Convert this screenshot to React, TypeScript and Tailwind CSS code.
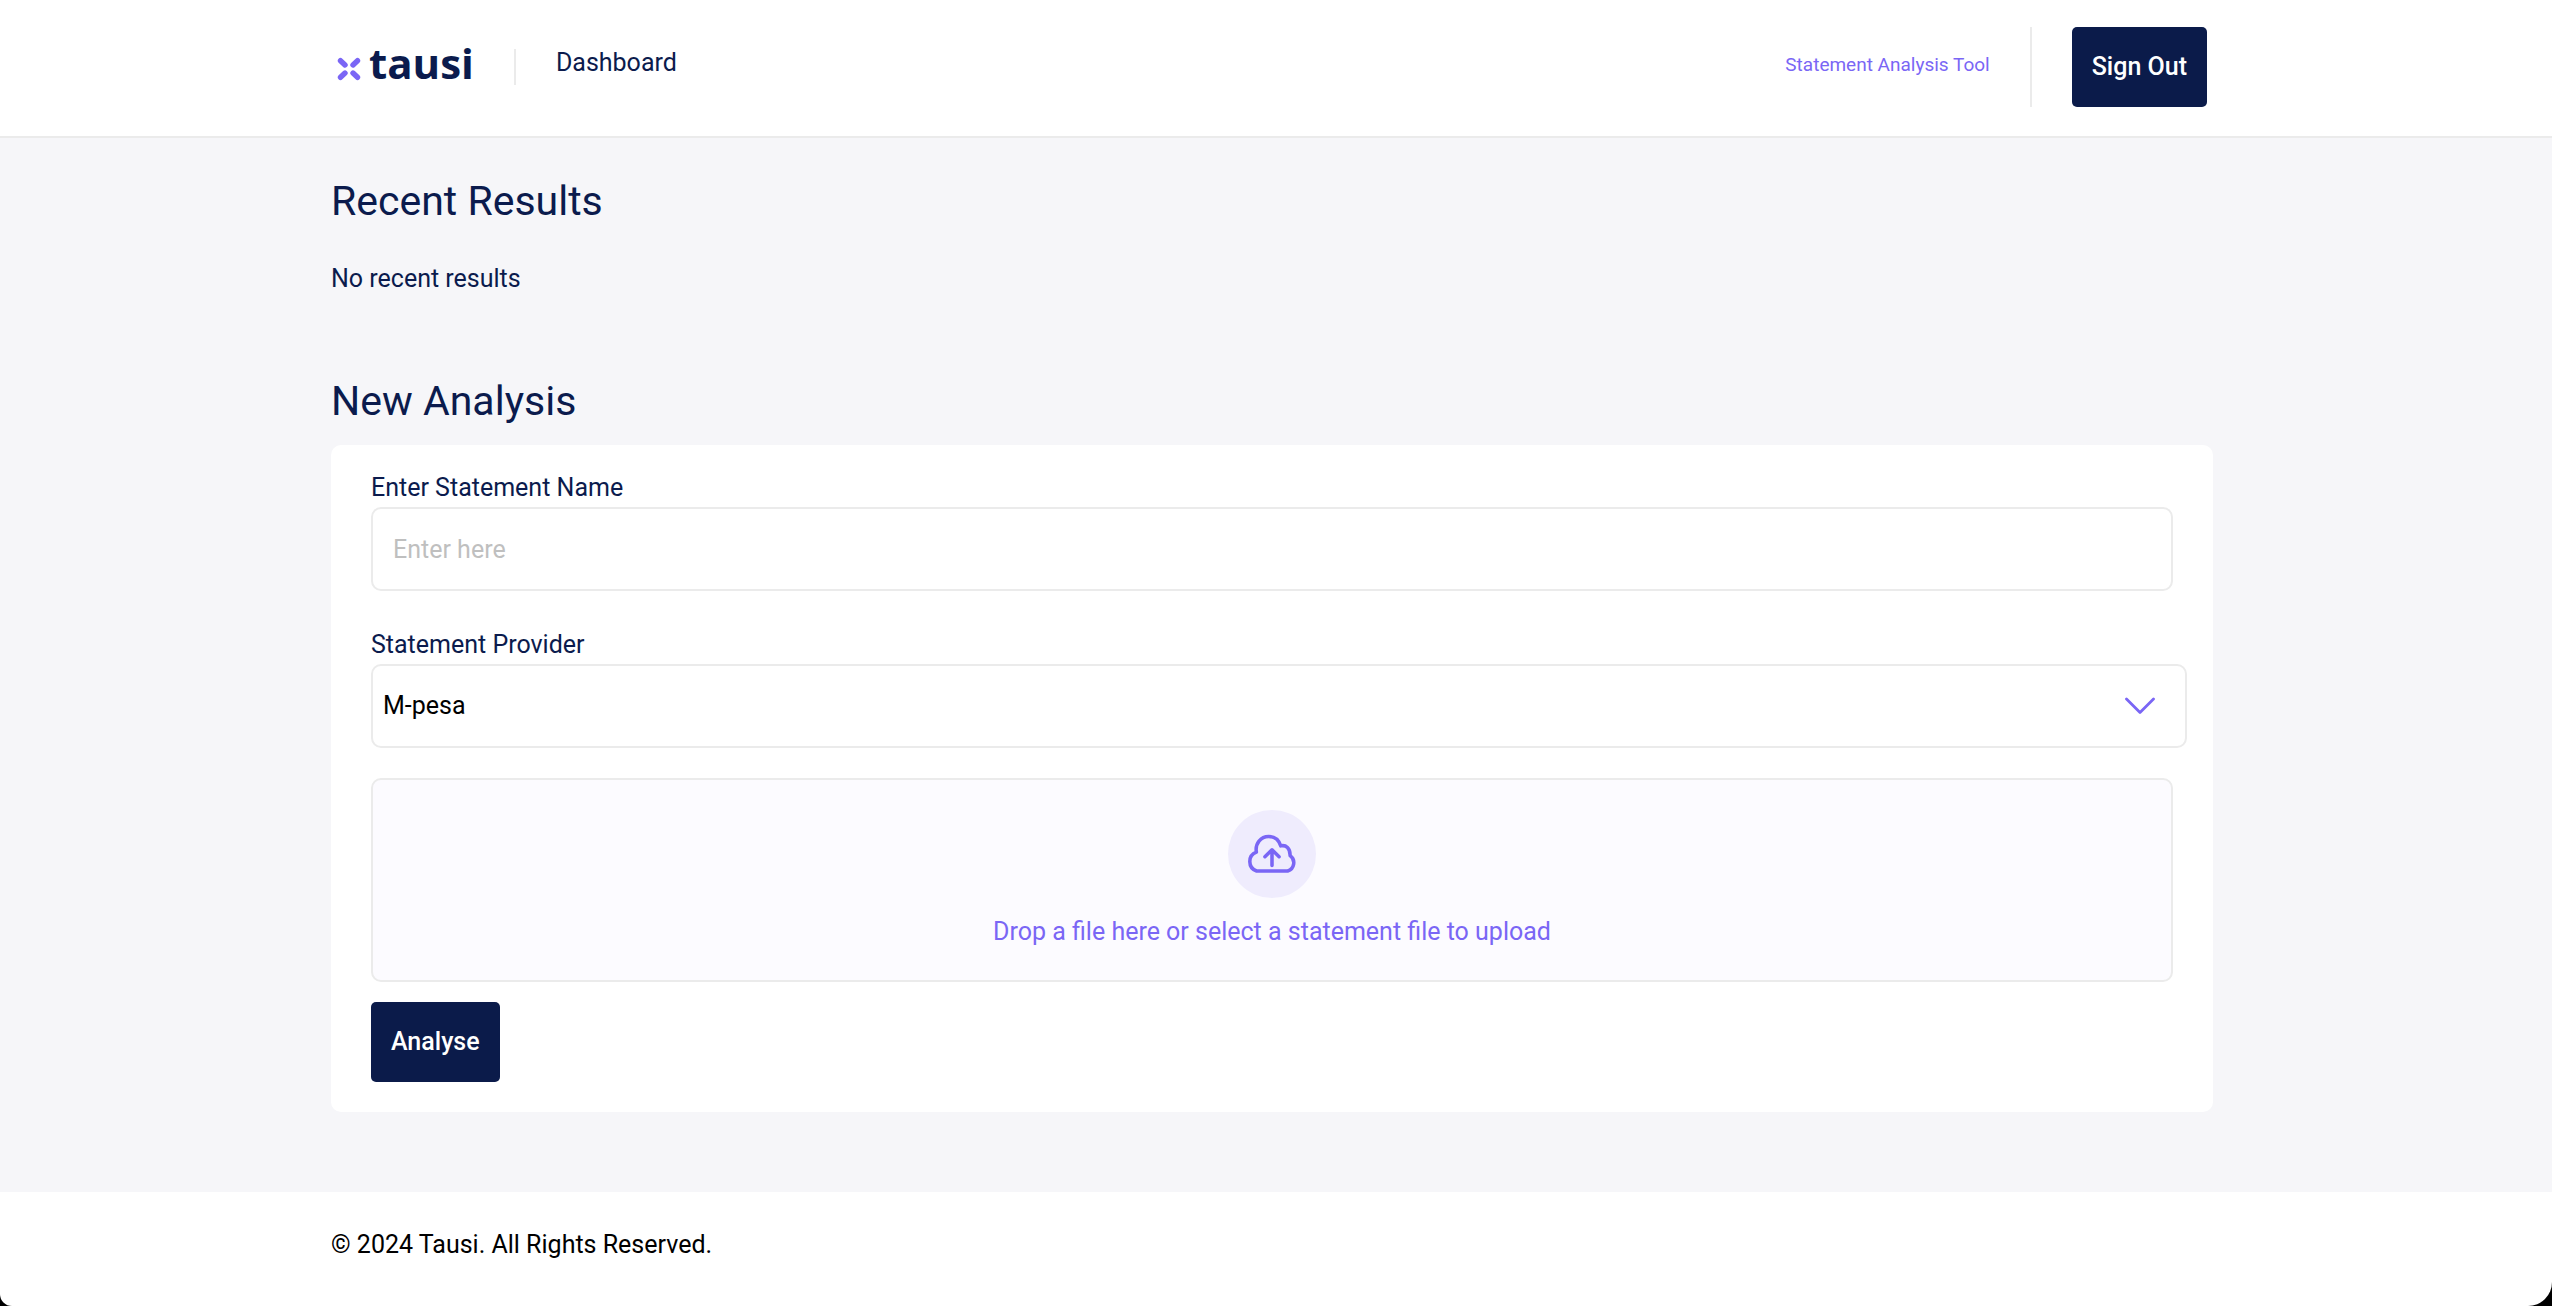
import { useState } from 'react'

function Logo() {
  return (
    <a href="/" className="flex items-center gap-2 text-[#0b1b4d]">
      <svg
        width="24"
        height="24"
        viewBox="0 0 24 24"
        fill="none"
        stroke="#7a66f5"
        strokeWidth="5.4"
        strokeLinecap="round"
        className="mt-1"
        aria-hidden="true"
      >
        <path d="M3.5 3.7 8 8M20.500 3.700 16 8M3.500 20.300 8 16M20.500 20.300 16 16" />
      </svg>
      <span className="pb-2 font-['Open_Sans',sans-serif] text-[42px] leading-[48px] font-bold">
        tausi
      </span>
    </a>
  )
}

function Header() {
  return (
    <header className="border-b-2 border-[#ebebeb] bg-white pt-[27px] pr-[345px] pb-[29px] pl-[337px]">
      <div className="flex h-20 items-center justify-between">
        <div className="flex items-center">
          <Logo />
          <div className="ml-10 h-9 w-0.5 bg-[#ebebeb]" />
          <nav className="ml-10 pb-2">
            <a href="/dashboard" className="text-[#0b1b4d]">
              Dashboard
            </a>
          </nav>
        </div>

        <div className="flex items-center">
          <p className="pb-1 text-[19px] text-[#7a66f5]">
            Statement Analysis Tool
          </p>
          <div className="ml-10 h-20 w-0.5 bg-[#ebebeb]" />
          <button
            type="button"
            className="ml-10 h-20 rounded-[5px] bg-[#0b1b4a] px-5 font-medium text-white"
          >
            Sign Out
          </button>
        </div>
      </div>
    </header>
  )
}

function CloudUploadIcon() {
  return (
    <svg
      width="50"
      height="40"
      viewBox="0 0 48 38"
      fill="none"
      stroke="#7a66f5"
      strokeWidth="3.4"
      strokeLinecap="round"
      strokeLinejoin="round"
      aria-hidden="true"
    >
      <path d="M9.2 35.3A9.6 9.6 0 0 1 9 17.2C7.6 9 13.2 2.2 20.8 2.2c5.6 0 9.6 3 11.6 9 5-1.200 9.200 2.400 9 9.400a8.300 8.300 0 0 1-2.400 14.700Z" />
      <path d="M24 30V15.500M17.200 21.600 24 15l6.800 6.600" />
    </svg>
  )
}

function AnalysisForm() {
  const [name, setName] = useState('')
  const [provider, setProvider] = useState('mpesa')

  function handleSubmit(event: React.FormEvent<HTMLFormElement>) {
    event.preventDefault()
  }

  return (
    <form
      onSubmit={handleSubmit}
      className="mt-5 rounded-[10px] bg-white px-10 pt-7 pb-[30px]"
    >
      <label htmlFor="name" className="block">
        Enter Statement Name
      </label>
      <input
        id="name"
        type="text"
        placeholder="Enter here"
        value={name}
        onChange={(event) => setName(event.target.value)}
        className="mt-1 block h-[84px] w-full rounded-[10px] border-2 border-[#ebebeb] px-5 text-black placeholder:text-[#bfbfbf]"
      />

      <label htmlFor="provider" className="mt-[39px] block">
        Statement Provider
      </label>
      <div className="relative mt-1 -mr-3.5">
        <select
          id="provider"
          value={provider}
          onChange={(event) => setProvider(event.target.value)}
          className="block h-[84px] w-full appearance-none rounded-[10px] border-2 border-[#ebebeb] bg-white px-2.5 text-black"
        >
          <option value="mpesa">M-pesa</option>
        </select>
        <svg
          width="30"
          height="18"
          viewBox="0 0 30 18"
          fill="none"
          stroke="#7a66f5"
          strokeWidth="2.8"
          strokeLinecap="round"
          strokeLinejoin="round"
          className="pointer-events-none absolute top-[33px] right-8"
          aria-hidden="true"
        >
          <path d="M1.500 2 15 15.500 28.500 2" />
        </svg>
      </div>

      <label className="mt-[30px] flex h-[204px] cursor-pointer flex-col items-center rounded-[10px] border-2 border-[#ebebeb] bg-[#fcfbff] pt-[30px] text-[#7a66f5]">
        <span className="flex size-22 items-center justify-center rounded-full bg-[#efecfd]">
          <CloudUploadIcon />
        </span>
        <span className="mt-[19px]">
          Drop a file here or select a statement file to upload
        </span>
        <input type="file" className="sr-only" />
      </label>

      <button
        type="submit"
        className="mt-5 h-20 rounded-[5px] bg-[#0b1b4a] px-5 font-medium text-white"
      >
        Analyse
      </button>
    </form>
  )
}

export default function App() {
  return (
    <div className="min-h-screen bg-black font-[Roboto,sans-serif] text-[25px] leading-[30px]">
      <div className="flex min-h-screen flex-col overflow-hidden rounded-br-[24px] rounded-bl-[12px] bg-white">
        <Header />

        <main className="bg-[#f6f6f9] pt-[39px] pr-[339px] pb-20 pl-[331px] text-[#0b1b4d]">
          <h2 className="text-[41px] leading-[48px]">Recent Results</h2>
          <p className="mt-[39px]">No recent results</p>

          <h2 className="mt-[83px] text-[41px] leading-[48px]">New Analysis</h2>
          <AnalysisForm />
        </main>

        <footer className="pt-[38px] pr-[339px] pl-[331px] text-black">
          <p>© 2024 Tausi. All Rights Reserved.</p>
        </footer>
      </div>
    </div>
  )
}
